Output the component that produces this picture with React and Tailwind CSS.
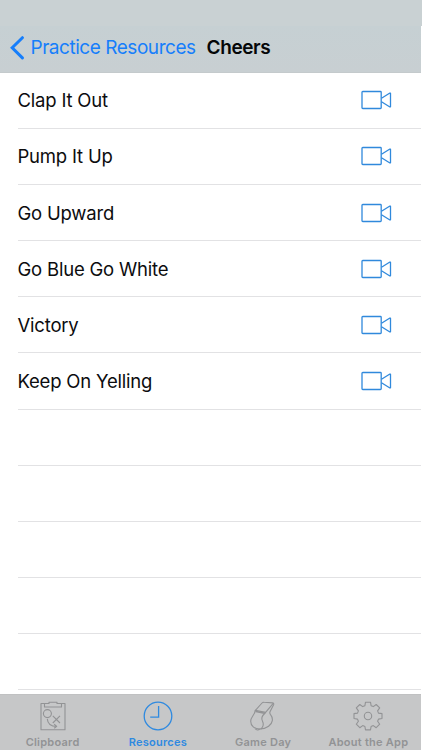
const CHEERS = [
  'Clap It Out',
  'Pump It Up',
  'Go Upward',
  'Go Blue Go White',
  'Victory',
  'Keep On Yelling',
]

// the table keeps drawing empty rows down to the tab bar
const ROW_COUNT = 11

const TABS = [
  { label: 'Clipboard', Icon: ClipboardIcon },
  { label: 'Resources', Icon: ClockIcon },
  { label: 'Game Day', Icon: WhistleIcon },
  { label: 'About the App', Icon: GearIcon },
]

export default function App() {
  return (
    <div className="flex flex-col w-[422px] h-[750px] overflow-hidden bg-white font-['Inter','Liberation_Sans',sans-serif]">
      <div className="h-[26px] shrink-0 bg-[#c9d1d3]" />
      <header className="flex items-center w-[421px] h-[46.6px] shrink-0 pl-2.5 pb-0.5 bg-linear-to-b from-[#c6d0d3] to-[#c8cfd2] border-b border-[#c4cacc]">
        <button className="flex items-center text-[#167efb]">
          <svg width="15" height="24" viewBox="0 0 15 24" fill="none" stroke="currentColor" strokeWidth="3" strokeLinecap="round">
            <path d="M12.4 1.7 2.2 11.8l10.2 10.1" />
          </svg>
          <span className="ml-[5.5px] text-[19px] leading-6 tracking-[-0.46px] whitespace-nowrap">Practice Resources</span>
        </button>
        <h1 className="ml-[11px] text-[19px] leading-6 font-semibold tracking-[-0.4px] text-[#050708]">Cheers</h1>
      </header>

      <main className="flex-1 min-h-0 w-[421px] overflow-hidden">
        {Array.from({ length: ROW_COUNT }, (_, i) => (
          <Row key={i} title={CHEERS[i]} />
        ))}
      </main>

      <nav className="grid grid-cols-4 w-[421px] h-14 shrink-0 bg-[#c6c7c8] border-t border-[#c0c1c2]">
        {TABS.map(({ label, Icon }) => (
          <Tab key={label} label={label} Icon={Icon} active={label === 'Resources'} />
        ))}
      </nav>
    </div>
  )
}

function Row({ title }) {
  return (
    <div className="h-[56.18px] pl-[17.5px]">
      <div className="flex items-center justify-between h-full pr-[29px] border-b border-[#e2e2e4]">
        {title && (
          <>
            <span className="text-[18.5px] leading-6 tracking-[-0.2px] text-[#0c0c0e]">{title}</span>
            <VideoIcon />
          </>
        )}
      </div>
    </div>
  )
}

function Tab({ label, Icon, active }) {
  return (
    <button className={`flex flex-col items-center pt-1.5 ${active ? 'text-[#2f8ae0]' : 'text-[#929395]'}`}>
      <Icon />
      <span className="mt-1 text-[11px] leading-[14px] font-semibold tracking-[0.25px] whitespace-nowrap">{label}</span>
    </button>
  )
}

function VideoIcon() {
  return (
    <svg width="31" height="20" viewBox="0 0 31 20" fill="none" stroke="#3089dc" strokeWidth="1.3" strokeLinejoin="round">
      <rect x="1" y="1.5" width="19.2" height="17" rx="0.8" />
      <path d="M20.5 8.2 28.5 3.2h1v13.6h-1l-8-5" />
    </svg>
  )
}

function ClipboardIcon() {
  return (
    <svg width="30" height="30" viewBox="0 0 30 30" fill="none" stroke="currentColor" strokeWidth="1.1" strokeLinejoin="round">
      <path d="M6.5 2.5H3v26.3h24V2.5h-3.5" />
      <path d="M6.5 6V2.5H11V1.2h8v1.3h4.5V6z" />
      <circle cx="9.4" cy="12.6" r="4" />
      <path d="m14.8 14.8 7.2 7.2M22 14.8 14.8 22" />
      <path d="M9.3 18c.4 4.5 3.7 7.4 9.2 7.4M16.2 23.2l2.5 2.2-2.5 1.9" />
    </svg>
  )
}

function ClockIcon() {
  return (
    <svg width="30" height="30" viewBox="0 0 30 30" fill="none" stroke="currentColor" strokeWidth="1.3">
      <circle cx="15" cy="15" r="13.8" />
      <path d="M15.6 5v11.2H7.2" />
    </svg>
  )
}

function WhistleIcon() {
  return (
    <svg width="30" height="30" viewBox="0 0 30 30" fill="none" stroke="currentColor" strokeWidth="1.1" strokeLinejoin="round" strokeLinecap="round">
      {/* mouthpiece and body */}
      <path d="M7.2 9.6 14 2c.6-.7 1.3-.9 2.2-.8l8.4.7c1 .1 1.400.9 1 1.800L22 10.800c-.4 1-.2 1.700.4 2.500 3.200 4 2.500 8.700-1.800 12-2.400 1.800-5.500 2.700-9 2.700-5.100 0-8.900-3.200-8.900-7.800 0-4.400 4.200-6.200 4.500-10.600z" />
      {/* front edge and air slot */}
      <path d="M25 2.6 17.600 11.400 7.200 9.300" />
      <path d="M8 10.500l8.500 1.700" strokeWidth="1.4" />
      <path d="M17.200 12c-3.600 3-4.300 5.400-2.700 8.300 1.500 2.900.8 5.500-1.500 7.700" />
      <path d="M7.500 28c.8 1.200 3 1.300 4 .2" />
    </svg>
  )
}

function GearIcon() {
  return (
    <svg width="30" height="30" viewBox="0 0 30 30" fill="none" stroke="currentColor" strokeWidth="1.1" strokeLinejoin="round">
      <path d="M12.5 1.2h5l.6 3.5 2.2.9 2.9-2.1 3.5 3.4-2.1 3 .9 2.2 3.5.5v4.900l-3.500.6-.9 2.200 2.100 2.900-3.500 3.500-2.900-2.100-2.200.9-.6 3.400h-5l-.6-3.400-2.200-.9-2.900 2.100-3.500-3.500 2.100-2.900-.9-2.200L1 17.500v-4.900l3.500-.5.9-2.200-2.100-3 3.500-3.400 2.900 2.100 2.200-.9z" />
      <circle cx="15" cy="15" r="3.7" />
    </svg>
  )
}
